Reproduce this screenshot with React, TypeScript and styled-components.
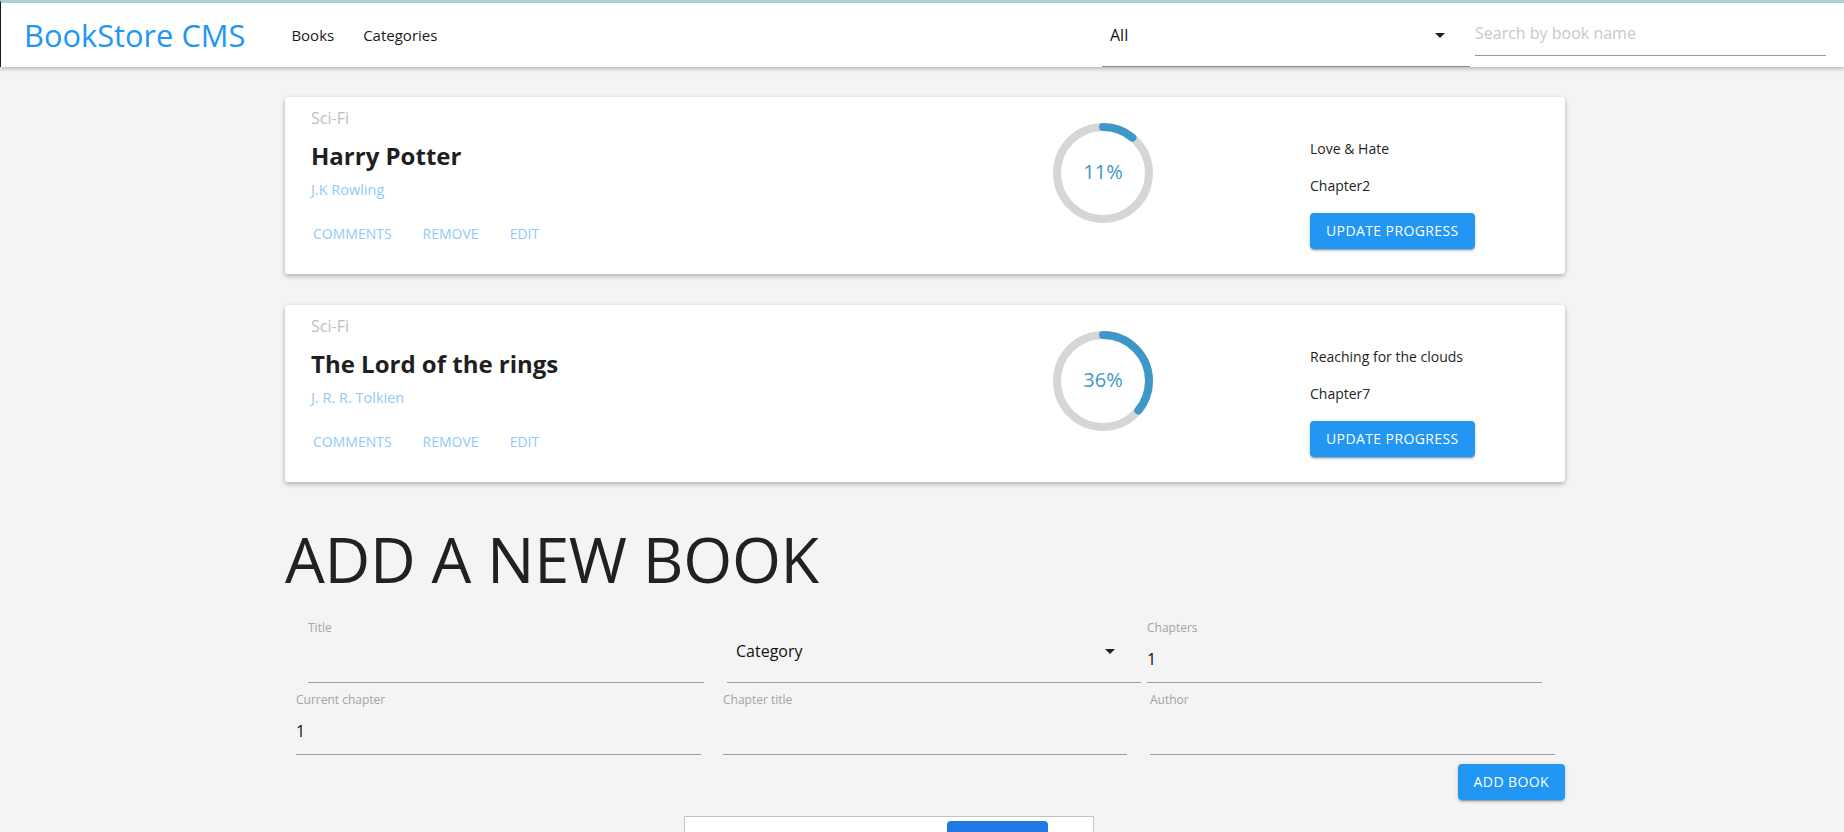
import styled, { createGlobalStyle } from 'styled-components';

type Book = {
  id: number;
  category: string;
  title: string;
  author: string;
  progress: number;
  chapterTitle: string;
  chapter: string;
};

const books: Book[] = [
  {
    id: 1,
    category: 'Sci-Fi',
    title: 'Harry Potter',
    author: 'J.K Rowling',
    progress: 11,
    chapterTitle: 'Love & Hate',
    chapter: 'Chapter2',
  },
  {
    id: 2,
    category: 'Sci-Fi',
    title: 'The Lord of the rings',
    author: 'J. R. R. Tolkien',
    progress: 36,
    chapterTitle: 'Reaching for the clouds',
    chapter: 'Chapter7',
  },
];

const GlobalStyle = createGlobalStyle`
  * {
    box-sizing: border-box;
  }

  body {
    margin: 0;
    background-color: #f4f4f4;
    font-family: 'Open Sans', 'Liberation Sans', sans-serif;
    color: #212121;
  }
`;

function Caret() {
  return (
    <svg width="24" height="24" viewBox="0 0 24 24" aria-hidden="true">
      <path d="M7 10l5 5 5-5z" fill="#222" />
    </svg>
  );
}

function ProgressCircle({ value }: { value: number }) {
  const length = 2 * Math.PI * 46;
  return (
    <ProgressSvg viewBox="0 0 100 100">
      <circle cx="50" cy="50" r="46" fill="none" stroke="#d6d6d6" strokeWidth="8" />
      <path
        d="M 50,50 m 0,-46 a 46,46 0 1 1 0,92 a 46,46 0 1 1 0,-92"
        fill="none"
        stroke="#3e98c7"
        strokeWidth="8"
        strokeLinecap="round"
        strokeDasharray={`${length}px ${length}px`}
        strokeDashoffset={`${((100 - value) / 100) * length}px`}
      />
      <ProgressText x="50" y="48.5">
        {value}%
      </ProgressText>
    </ProgressSvg>
  );
}

function BookCard({ book }: { book: Book }) {
  return (
    <Card>
      <Info>
        <Category>{book.category}</Category>
        <Title>{book.title}</Title>
        <Author>{book.author}</Author>
        <Actions>
          <LinkButton>Comments</LinkButton>
          <LinkButton>Remove</LinkButton>
          <LinkButton>Edit</LinkButton>
        </Actions>
      </Info>
      <ProgressBox>
        <ProgressCircle value={book.progress} />
      </ProgressBox>
      <ChapterBox>
        <ChapterText>{book.chapterTitle}</ChapterText>
        <ChapterText $gap={17}>{book.chapter}</ChapterText>
        <PrimaryButton $top={17}>Update progress</PrimaryButton>
      </ChapterBox>
    </Card>
  );
}

export default function App() {
  return (
    <>
      <GlobalStyle />
      <Header>
        <Logo>BookStore CMS</Logo>
        <Nav>
          <NavLink>Books</NavLink>
          <NavLink>Categories</NavLink>
        </Nav>
        <HeaderTools>
          <FilterSelect>
            <span>All</span>
            <Caret />
          </FilterSelect>
          <SearchInput placeholder="Search by book name" />
        </HeaderTools>
      </Header>

      <Page>
        <Main>
          <BookList>
            {books.map((book) => (
              <BookCard key={book.id} book={book} />
            ))}
          </BookList>

          <FormTitle>ADD A NEW BOOK</FormTitle>

          <FormRow $pl={23}>
            <Field $w={396}>
              <Label>Title</Label>
              <Input />
            </Field>
            <SelectField $w={414} $ml={23}>
              <span>Category</span>
              <Caret />
            </SelectField>
            <Field $w={395} $ml={6}>
              <Label>Chapters</Label>
              <Input defaultValue="1" />
            </Field>
          </FormRow>

          <FormRow $pl={11} $mt={9}>
            <Field $w={405}>
              <Label>Current chapter</Label>
              <Input defaultValue="1" />
            </Field>
            <Field $w={404} $ml={22}>
              <Label>Chapter title</Label>
              <Input />
            </Field>
            <Field $w={405} $ml={23}>
              <Label>Author</Label>
              <Input />
            </Field>
          </FormRow>

          <SubmitRow>
            <PrimaryButton>Add book</PrimaryButton>
          </SubmitRow>

          <Widget>
            <WidgetButton />
          </Widget>
        </Main>
      </Page>
    </>
  );
}

const Header = styled.header`
  position: relative;
  z-index: 1;
  display: flex;
  align-items: center;
  height: 67px;
  padding: 0 18px 0 23px;
  background-color: #fff;
  border-top: 3px solid #a9d3d3;
  border-left: 1px solid #1d1d1d;
  box-shadow: 0 2px 4px rgba(0, 0, 0, 0.25);
`;

const Logo = styled.h1`
  margin: 0;
  font-size: 30.8px;
  font-weight: 400;
  color: #2196f3;
`;

const Nav = styled.nav`
  display: flex;
  gap: 29px;
  margin-left: 46px;
`;

const NavLink = styled.a`
  font-size: 15px;
  color: #1a1a1a;
  cursor: pointer;
`;

const HeaderTools = styled.div`
  display: flex;
  align-self: stretch;
  margin-left: auto;
`;

const FilterSelect = styled.div`
  display: flex;
  align-items: center;
  justify-content: space-between;
  width: 368px;
  padding: 0 18px 0 8px;
  font-size: 16px;
  color: #111;
  border-bottom: 1px solid #8a8a8a;
`;

const SearchInput = styled.input`
  align-self: flex-start;
  width: 351px;
  margin: 16px 0 0 5px;
  padding: 2px 0 10px;
  font-family: inherit;
  font-size: 16px;
  line-height: 24px;
  background: transparent;
  border: none;
  border-bottom: 1px solid #9a9a9a;
  outline: none;

  &::placeholder {
    color: #c8c8c8;
  }
`;

const Page = styled.div`
  display: flex;
  justify-content: center;
  padding-left: 6px;
`;

const Main = styled.main`
  width: 1280px;
  margin-top: 30px;
`;

const BookList = styled.div`
  display: flex;
  flex-direction: column;
  gap: 31px;
`;

const Card = styled.article`
  display: flex;
  background-color: #fff;
  border-radius: 3px;
  box-shadow: 0 2px 5px rgba(0, 0, 0, 0.3);
`;

const Info = styled.div`
  flex: 1;
  padding: 11px 26px 30px;
`;

const Category = styled.div`
  font-size: 16px;
  line-height: 20px;
  color: #bdbdbd;
`;

const Title = styled.h2`
  margin: 13px 0 0;
  font-size: 24px;
  line-height: 30px;
  font-weight: 700;
  color: #1f1f1f;
`;

const Author = styled.div`
  margin-top: 9px;
  font-size: 14.5px;
  line-height: 20px;
  color: #90caf9;
`;

const Actions = styled.div`
  display: flex;
  gap: 31px;
  margin: 24px 0 0 2px;
`;

const LinkButton = styled.button`
  padding: 0;
  font-family: inherit;
  font-size: 14px;
  line-height: 20px;
  text-transform: uppercase;
  color: #90caf9;
  background: none;
  border: none;
  cursor: pointer;
`;

const ProgressBox = styled.div`
  width: 100px;
  margin-top: 26px;
`;

const ProgressSvg = styled.svg`
  display: block;
  width: 100px;
  height: 100px;
`;

const ProgressText = styled.text`
  font-family: 'Open Sans', 'Liberation Sans', sans-serif;
  font-size: 20px;
  fill: #3e98c7;
  text-anchor: middle;
  dominant-baseline: central;
`;

const ChapterBox = styled.div`
  width: 255px;
  margin-left: 157px;
  padding-top: 42px;
`;

const ChapterText = styled.div<{ $gap?: number }>`
  margin-top: ${(p) => p.$gap ?? 0}px;
  font-size: 14px;
  line-height: 20px;
  color: #1f1f1f;
`;

const PrimaryButton = styled.button<{ $top?: number }>`
  margin-top: ${(p) => p.$top ?? 0}px;
  padding: 6px 16px;
  font-family: inherit;
  font-size: 14px;
  font-weight: 500;
  line-height: 24px;
  letter-spacing: 0.4px;
  text-transform: uppercase;
  color: #fff;
  background-color: #2196f3;
  border: none;
  border-radius: 4px;
  box-shadow: 0 3px 1px -2px rgba(0, 0, 0, 0.2), 0 2px 2px 0 rgba(0, 0, 0, 0.14),
    0 1px 5px 0 rgba(0, 0, 0, 0.12);
  cursor: pointer;
`;

const FormTitle = styled.h2`
  margin: 45px 0 0;
  font-size: 63px;
  line-height: 64px;
  font-weight: 400;
  letter-spacing: -0.3px;
  color: #212121;
`;

const FormRow = styled.div<{ $pl: number; $mt?: number }>`
  display: flex;
  margin-top: ${(p) => p.$mt ?? 29}px;
  padding-left: ${(p) => p.$pl}px;
`;

const Field = styled.label<{ $w: number; $ml?: number }>`
  display: flex;
  flex-direction: column;
  width: ${(p) => p.$w}px;
  margin-left: ${(p) => p.$ml ?? 0}px;
`;

const Label = styled.span`
  font-size: 12px;
  line-height: 16px;
  color: #a3a3a3;
`;

const Input = styled.input`
  padding: 11px 0;
  font-family: inherit;
  font-size: 16px;
  line-height: 24px;
  color: #111;
  background: transparent;
  border: none;
  border-bottom: 1px solid #9e9e9e;
  outline: none;
`;

const SelectField = styled.div<{ $w: number; $ml?: number }>`
  display: flex;
  align-items: center;
  justify-content: space-between;
  width: ${(p) => p.$w}px;
  margin-left: ${(p) => p.$ml ?? 0}px;
  padding: 0 19px 0 9px;
  font-size: 16px;
  color: #111;
  border-bottom: 1px solid #9e9e9e;
`;

const SubmitRow = styled.div`
  display: flex;
  justify-content: flex-end;
  margin-top: 9px;
`;

const Widget = styled.div`
  width: 410px;
  height: 70px;
  margin: 16px 0 0 399px;
  padding: 4px 0 0 262px;
  background-color: #fff;
  border: 1px solid #c1c1c1;
`;

const WidgetButton = styled.div`
  width: 101px;
  height: 40px;
  background-color: #1f78e6;
  border-radius: 4px;
`;
